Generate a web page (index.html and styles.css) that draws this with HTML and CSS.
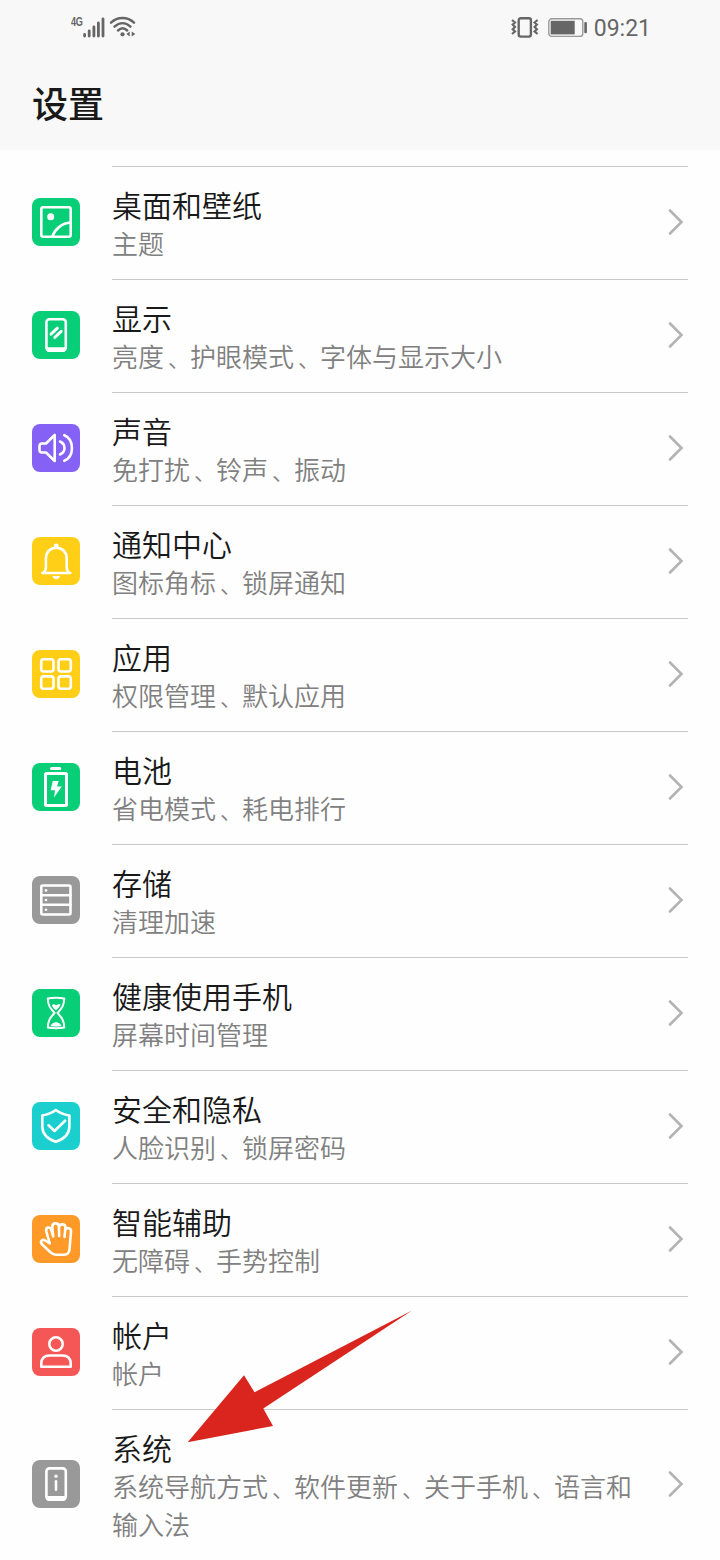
FILE: index.html
```html
<!DOCTYPE html>
<html lang="zh-CN">
<head>
<meta charset="utf-8">
<title>设置</title>
<link rel="stylesheet" href="styles.css">
</head>
<body>
<div class="screen">
<header class="header">
  <div class="status">
    <div class="status-left">
      <span class="network">4G</span>
      <svg class="signal" width="22" height="22" viewBox="0 0 22 22"><path d="M1.600 18.500v1.500M6.200 15v5M10.900 11v9M15.400 7v13M20 3v17"/></svg>
      <svg class="wifi" width="28" height="22" viewBox="0 0 28 22"><path class="arc" d="M2 7.700C8.500 1.500 18.500 1.500 25 7.700M5.500 11.700C10.500 7 16.500 7 21.500 11.700M9 15.500C12 12.600 15.200 12.600 18.200 15.500"/><circle cx="13.500" cy="19.300" r="2.100"/><path d="M20.700 16.500v5l-3.300-2.500zM22.700 16.500v5l3.600-2.500z"/></svg>
    </div>
    <div class="status-right">
      <svg class="vibrate" width="28" height="24" viewBox="0 0 28 24"><rect x="7.700" y="3.200" width="12.200" height="18.400" rx="2"/><path d="M1 5l3 2.500-2.300 2L4 12l-2.300 2.300L4 16.500 1 19M26.600 5l-3 2.500 2.300 2L23.600 12l2.300 2.300-2.300 2.200 3 2.500"/></svg>
      <svg class="battery" width="40" height="20" viewBox="0 0 40 20"><rect class="shell" x="0.800" y="0.800" width="34" height="17.600" rx="3"/><rect x="2.700" y="2.800" width="24" height="13.600"/><rect x="36.300" y="4" width="2.600" height="11.300" rx="1"/></svg>
      <span class="time">09:21</span>
    </div>
  </div>
  <h1 class="page-title">设置</h1>
</header>
<main class="list">
  <section class="row">
    <svg class="icon green" viewBox="0 0 48 48"><rect x="9.300" y="9.300" width="29.400" height="29.400" rx="2"/><circle class="solid" cx="18.700" cy="18.700" r="3.500"/><path d="M20.300 38.500C23 31 30 25 38.500 24.500"/></svg>
    <div class="body"><div class="text"><h2>桌面和壁纸</h2><p>主题</p></div><svg class="chevron" viewBox="0 0 16 28"><path d="M2 2.500l11.500 11.500L2 25.500"/></svg></div>
  </section>
  <section class="row">
    <svg class="icon green" viewBox="0 0 48 48"><rect x="14.400" y="8.200" width="19.400" height="31.400" rx="3"/><path class="solid" d="M14 36.300h20v3l-2 1.500H16l-2-1.500z"/><path class="thick" d="M19 23.200l6.400-6M22.800 26.400l6.400-6"/></svg>
    <div class="body"><div class="text"><h2>显示</h2><p>亮度<i>、</i>护眼模式<i>、</i>字体与显示大小</p></div><svg class="chevron" viewBox="0 0 16 28"><path d="M2 2.500l11.500 11.500L2 25.500"/></svg></div>
  </section>
  <section class="row">
    <svg class="icon purple" viewBox="0 0 48 48"><path d="M22.700 11v26l-8.700-8.500H10q-2.500 0-2.500-2.500v-4Q7.500 19.500 10 19.500h4zM28 17.500Q32.500 19.500 32.500 24t-4.500 6.500M32.300 11.200C42.500 15.500 42.500 32.500 32.300 36.800"/></svg>
    <div class="body"><div class="text"><h2>声音</h2><p>免打扰<i>、</i>铃声<i>、</i>振动</p></div><svg class="chevron" viewBox="0 0 16 28"><path d="M2 2.500l11.500 11.500L2 25.500"/></svg></div>
  </section>
  <section class="row">
    <svg class="icon yellow" viewBox="0 0 48 48"><path d="M10.300 36h28M11.500 35.500Q13.900 34 13.900 30v-8.500C13.900 15 18.300 10.800 24.300 10.800S34.700 15 34.700 21.500V30q0 4 2.300 5.500"/><circle class="solid" cx="24.300" cy="8.800" r="2.400"/><path class="solid" d="M20.500 39h7.500q-1 3.300-3.700 3.300T20.500 39z"/></svg>
    <div class="body"><div class="text"><h2>通知中心</h2><p>图标角标<i>、</i>锁屏通知</p></div><svg class="chevron" viewBox="0 0 16 28"><path d="M2 2.500l11.500 11.500L2 25.500"/></svg></div>
  </section>
  <section class="row">
    <svg class="icon yellow" viewBox="0 0 48 48"><rect x="9.200" y="9.200" width="12.300" height="12.300" rx="2.500"/><rect x="26.500" y="9.200" width="12.300" height="12.300" rx="2.500"/><rect x="9.200" y="26.400" width="12.300" height="12.300" rx="2.500"/><rect x="26.500" y="26.400" width="12.300" height="12.300" rx="2.500"/></svg>
    <div class="body"><div class="text"><h2>应用</h2><p>权限管理<i>、</i>默认应用</p></div><svg class="chevron" viewBox="0 0 16 28"><path d="M2 2.500l11.500 11.500L2 25.500"/></svg></div>
  </section>
  <section class="row">
    <svg class="icon green" viewBox="0 0 48 48"><path class="heavy" d="M19.500 5.500h8.300"/><rect class="heavy" x="13.500" y="10.400" width="21" height="32" rx="1"/><path class="solid" d="M20.700 18h6l-1.700 5.500h4.800L22 34.500l1-7.200h-4.300z"/></svg>
    <div class="body"><div class="text"><h2>电池</h2><p>省电模式<i>、</i>耗电排行</p></div><svg class="chevron" viewBox="0 0 16 28"><path d="M2 2.500l11.500 11.500L2 25.500"/></svg></div>
  </section>
  <section class="row">
    <svg class="icon gray" viewBox="0 0 48 48"><rect x="9.300" y="9.500" width="29.200" height="29" rx="1.500"/><path d="M9.300 19.200h29M9.300 28.800h29"/><circle class="solid" cx="14" cy="14.400" r="1.300"/><circle class="solid" cx="14" cy="24" r="1.300"/><circle class="solid" cx="14" cy="33.700" r="1.300"/></svg>
    <div class="body"><div class="text"><h2>存储</h2><p>清理加速</p></div><svg class="chevron" viewBox="0 0 16 28"><path d="M2 2.500l11.500 11.500L2 25.500"/></svg></div>
  </section>
  <section class="row">
    <svg class="icon green" viewBox="0 0 48 48"><path class="thin" d="M15.800 9.500Q24 8 32.300 9.500C32 17.500 29 20 25.500 24C29 28 32 30.500 32.300 38.500Q24 40 15.800 38.500C16 30.500 19 28 22.600 24C19 20 16 17.500 15.800 9.500z"/><path class="solid" d="M20 16.500q1.500-2.500 4 0 2.500-2.500 4.500-1-.5 3-4.500 5.700-3.500-2.200-4-4.700zM18.500 37q1-3 5.500-4 4.500 1 5.500 4-5.500 1-11 0z"/></svg>
    <div class="body"><div class="text"><h2>健康使用手机</h2><p>屏幕时间管理</p></div><svg class="chevron" viewBox="0 0 16 28"><path d="M2 2.500l11.500 11.500L2 25.500"/></svg></div>
  </section>
  <section class="row">
    <svg class="icon cyan" viewBox="0 0 48 48"><path d="M23.800 8Q29 12 37.400 13.500v11C37.400 32 32 37 23.800 39.800C15.600 37 10.300 32 10.300 24.500v-11Q18.500 12 23.800 8zM16.500 23.300l6 5.700 10.600-10.300"/></svg>
    <div class="body"><div class="text"><h2>安全和隐私</h2><p>人脸识别<i>、</i>锁屏密码</p></div><svg class="chevron" viewBox="0 0 16 28"><path d="M2 2.500l11.500 11.500L2 25.500"/></svg></div>
  </section>
  <section class="row">
    <svg class="icon orange" viewBox="0 0 48 48"><path d="M17.800 28.500L14.300 16.500C13.200 12.300 18 10.800 19.200 14.800L21.200 21.500M21.200 21.500L20.300 12C20.200 7.300 26.500 7.300 26.900 11.500L27.200 21M27.200 12C27.700 8.200 33.500 8.500 33.400 12.700L32.500 22M33.200 15.500C34 12 39.300 12.500 39 16.500L37.500 34.500Q37 39.700 32 39.700H24Q21 39.700 19 37.700L10 29.300C7.500 26.500 10.500 23.800 13.200 25.500L17.800 28.500"/></svg>
    <div class="body"><div class="text"><h2>智能辅助</h2><p>无障碍<i>、</i>手势控制</p></div><svg class="chevron" viewBox="0 0 16 28"><path d="M2 2.500l11.500 11.500L2 25.500"/></svg></div>
  </section>
  <section class="row">
    <svg class="icon red" viewBox="0 0 48 48"><circle cx="24" cy="16" r="6.700"/><path d="M9.300 38.800v-3Q9.300 27.500 17.500 27.500h13Q38.700 27.500 38.700 35.800v3z"/></svg>
    <div class="body"><div class="text"><h2>帐户</h2><p>帐户</p></div><svg class="chevron" viewBox="0 0 16 28"><path d="M2 2.500l11.500 11.500L2 25.500"/></svg></div>
  </section>
  <section class="row">
    <svg class="icon gray" viewBox="0 0 48 48"><rect x="14.400" y="8.400" width="19.400" height="31.200" rx="3"/><path class="solid" d="M14 36h20v3.300l-2 1.500H16l-2-1.500z"/><circle class="solid" cx="24" cy="16.300" r="1.700"/><path d="M24 21.200v8.500"/></svg>
    <div class="body"><div class="text"><h2>系统</h2><p>系统导航方式<i>、</i>软件更新<i>、</i>关于手机<i>、</i>语言和<br>输入法</p></div><svg class="chevron" viewBox="0 0 16 28"><path d="M2 2.500l11.500 11.500L2 25.500"/></svg></div>
  </section>
</main>
<svg class="pointer" viewBox="0 0 226 134"><path d="M0.700 132.200L57 65.300l10.500 17L225 0.500 76.300 98.500 86 116z"/></svg>
</div>
</body>
</html>
```
FILE: styles.css
```css
* { box-sizing: border-box; margin: 0; padding: 0; }
body {
  background: #fefefe;
  color: #191919;
  font-family: "Noto Sans CJK SC", sans-serif;
}
.screen { position: relative; width: 720px; height: 1560px; overflow: hidden; }
.header { height: 150px; background: #f8f8f8; }
.status {
  display: flex;
  justify-content: space-between;
  height: 56px;
  padding: 0 69px 0 71px;
  color: #666;
  fill: #666;
}
.status-left { display: flex; padding-top: 15px; }
.status-right { display: flex; align-items: center; }
.network { width: 12px; font: bold 13px/13px "Liberation Sans", sans-serif; letter-spacing: -.3px; transform: scaleX(.7); transform-origin: left; }
.signal { margin-top: 1px; fill: none; stroke: #666; stroke-width: 2.800; stroke-linecap: round; }
.wifi { margin-left: 4px; }
.wifi .arc { fill: none; stroke: #666; stroke-width: 2.500; stroke-linecap: round; }
.vibrate { margin-top: -2px; fill: none; stroke: #666; stroke-width: 2.400; }
.vibrate path { stroke-width: 2.200; }
.battery { margin: 0 6px 0 9px; }
.battery .shell { fill: none; stroke: #999; stroke-width: 1.400; }
.time { padding-top: 2px; font: 23px/54px Roboto, sans-serif; }
.page-title { padding-left: 32px; font-size: 36px; line-height: 92px; font-weight: 500; }
.list { padding-top: 16px; }
.row { display: flex; align-items: center; padding: 0 32px; }
.icon {
  flex: none;
  width: 48px;
  height: 48px;
  margin-right: 32px;
  margin-bottom: 1px;
  border-radius: 8px;
  fill: none;
  stroke: #fff;
  stroke-width: 2.600;
  stroke-linecap: round;
  stroke-linejoin: round;
}
.icon .solid { fill: #fff; stroke: none; }
.icon .thick, .icon .heavy { stroke-width: 3; }
.icon .thin { stroke-width: 2; }
.green { background: #07ce77; }
.purple { background: #8661f5; }
.yellow { background: #ffcf17; }
.gray { background: #999; }
.cyan { background: #1acfce; }
.orange { background: #ff9a29; }
.red { background: #f55656; }
.body {
  display: flex;
  flex: 1;
  align-items: center;
  justify-content: space-between;
  padding: 18px 4px 17px 0;
  border-top: 1px solid #c9c9c9;
}
.text h2 { padding-bottom: 1px; font-size: 30px; line-height: 38px; font-weight: 350; }
.text p { font-size: 26px; line-height: 38px; color: #808080; white-space: nowrap; font-weight: 350; }
.text i { display: inline-block; width: 26px; padding-left: 4px; font-size: 22px; line-height: 1; font-style: normal; }
.chevron {
  flex: none;
  width: 16px;
  height: 28px;
  margin-top: -3px;
  fill: none;
  stroke: #b3b3b3;
  stroke-width: 2.600;
  stroke-linecap: round;
}
.pointer { position: absolute; left: 187px; top: 1310px; width: 226px; height: 134px; fill: #da251e; }
```
